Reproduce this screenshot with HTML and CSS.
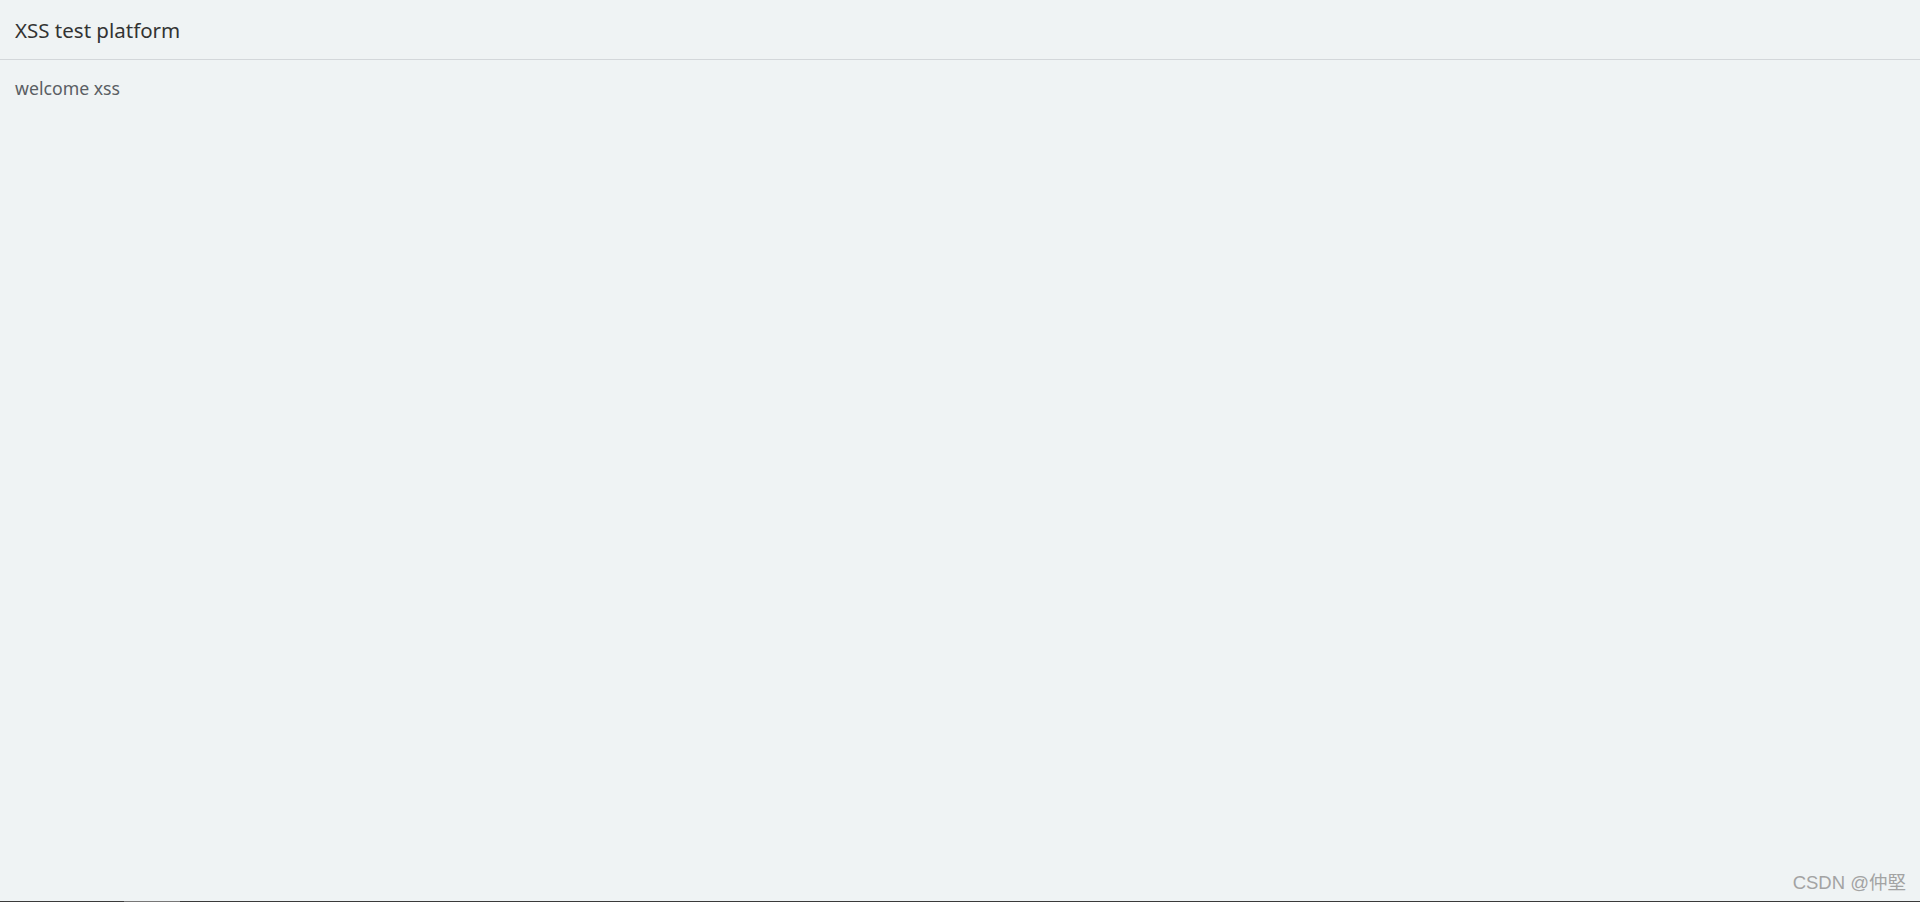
FILE: index.html
```html
<!DOCTYPE html>
<html>
<head>
<meta charset="utf-8">
<link rel="stylesheet" href="styles.css">
</head>
<body>
<div class="page">
  <header class="topbar"><span class="title">XSS test platform</span></header>
  <main class="content"><p class="welcome">welcome xss</p></main>
  <div class="watermark">CSDN @仲堅</div>
  <div class="taskbar"><span class="seg"></span></div>
</div>
</body>
</html>
```
FILE: styles.css
```css
html, body { margin: 0; padding: 0; height: 100%; }
body {
  background: #eff3f4;
  font-family: "Noto Sans", "Noto Sans CJK SC", sans-serif;
  overflow: hidden;
}
.page { position: relative; height: 902px; display: flex; flex-direction: column; }
.topbar {
  height: 59px;
  border-bottom: 1px solid #d3d7da;
  display: flex;
  align-items: center;
  padding: 0 15px;
}
.title { font-size: 20.5px; color: #333; margin-top: 1px; }
.content { padding: 0 15px; flex: 1; }
.welcome { margin: 16px 0 0; font-size: 17.7px; color: #5a5e63; line-height: 24px; }
.watermark {
  position: absolute;
  right: 14px;
  bottom: 8px;
  font-size: 18.5px;
  color: #a3a3a3;
  font-family: "Liberation Sans", "Noto Sans CJK SC", sans-serif;
}
.taskbar { height: 1px; background: #3a3a3a; display: flex; }
.seg { margin-left: 124px; width: 56px; background: #777; }
```
